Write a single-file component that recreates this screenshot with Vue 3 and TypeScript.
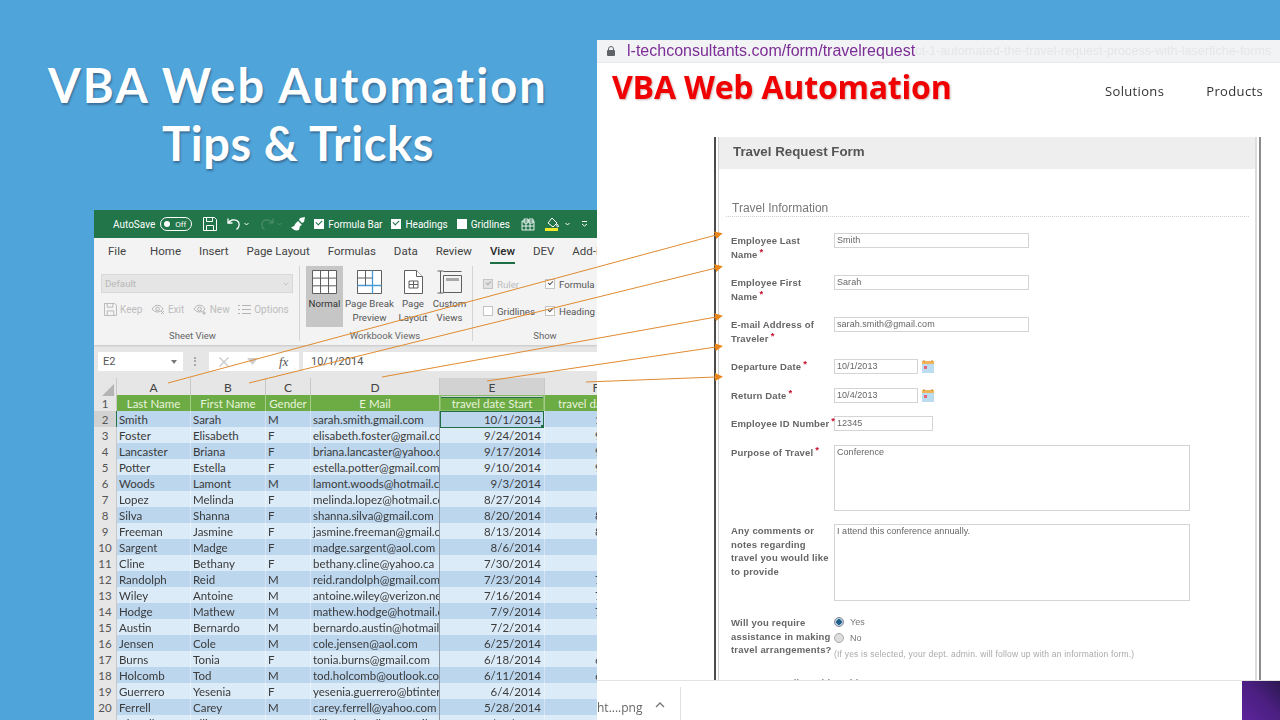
<script setup lang="ts">
interface Person {
  last: string
  first: string
  gender: string
  email: string
  start: string
  end: string
}

const rows: Person[] = [
  { last: 'Smith', first: 'Sarah', gender: 'M', email: 'sarah.smith.gmail.com', start: '10/1/2014', end: '10/4/2014' },
  { last: 'Foster', first: 'Elisabeth', gender: 'F', email: 'elisabeth.foster@gmail.com', start: '9/24/2014', end: '9/27/2014' },
  { last: 'Lancaster', first: 'Briana', gender: 'F', email: 'briana.lancaster@yahoo.com', start: '9/17/2014', end: '9/20/2014' },
  { last: 'Potter', first: 'Estella', gender: 'F', email: 'estella.potter@gmail.com', start: '9/10/2014', end: '9/13/2014' },
  { last: 'Woods', first: 'Lamont', gender: 'M', email: 'lamont.woods@hotmail.com', start: '9/3/2014', end: '9/6/2014' },
  { last: 'Lopez', first: 'Melinda', gender: 'F', email: 'melinda.lopez@hotmail.com', start: '8/27/2014', end: '9/1/2014' },
  { last: 'Silva', first: 'Shanna', gender: 'F', email: 'shanna.silva@gmail.com', start: '8/20/2014', end: '8/23/2014' },
  { last: 'Freeman', first: 'Jasmine', gender: 'F', email: 'jasmine.freeman@gmail.com', start: '8/13/2014', end: '8/16/2014' },
  { last: 'Sargent', first: 'Madge', gender: 'F', email: 'madge.sargent@aol.com', start: '8/6/2014', end: '8/9/2014' },
  { last: 'Cline', first: 'Bethany', gender: 'F', email: 'bethany.cline@yahoo.ca', start: '7/30/2014', end: '8/2/2014' },
  { last: 'Randolph', first: 'Reid', gender: 'M', email: 'reid.randolph@gmail.com', start: '7/23/2014', end: '7/26/2014' },
  { last: 'Wiley', first: 'Antoine', gender: 'M', email: 'antoine.wiley@verizon.net', start: '7/16/2014', end: '7/19/2014' },
  { last: 'Hodge', first: 'Mathew', gender: 'M', email: 'mathew.hodge@hotmail.com', start: '7/9/2014', end: '7/12/2014' },
  { last: 'Austin', first: 'Bernardo', gender: 'M', email: 'bernardo.austin@hotmail.com', start: '7/2/2014', end: '7/5/2014' },
  { last: 'Jensen', first: 'Cole', gender: 'M', email: 'cole.jensen@aol.com', start: '6/25/2014', end: '7/1/2014' },
  { last: 'Burns', first: 'Tonia', gender: 'F', email: 'tonia.burns@gmail.com', start: '6/18/2014', end: '6/21/2014' },
  { last: 'Holcomb', first: 'Tod', gender: 'M', email: 'tod.holcomb@outlook.com', start: '6/11/2014', end: '6/14/2014' },
  { last: 'Guerrero', first: 'Yesenia', gender: 'F', email: 'yesenia.guerrero@btinternet.com', start: '6/4/2014', end: '6/7/2014' },
  { last: 'Ferrell', first: 'Carey', gender: 'M', email: 'carey.ferrell@yahoo.com', start: '5/28/2014', end: '6/1/2014' },
  { last: 'Chandler', first: 'Ellison', gender: 'M', email: 'ellison.chandler@gmail.com', start: '5/21/2014', end: '5/24/2014' }
]

const tabs = ['File', 'Home', 'Insert', 'Page Layout', 'Formulas', 'Data', 'Review', 'View', 'DEV', 'Add-ins']

const columns = ['A', 'B', 'C', 'D', 'E', 'F']

const arrows = [
  'M168 383 L716 235',
  'M249 383 L716 268',
  'M382 377 L716 317',
  'M487 381 L716 347',
  'M586 382 L716 377'
]

interface Field {
  lines: string[]
  value: string
  size: 'wide' | 'date' | 'id'
  cls: string
}

const fields: Field[] = [
  { lines: ['Employee Last', 'Name'], value: 'Smith', size: 'wide', cls: 'row-42' },
  { lines: ['Employee First', 'Name'], value: 'Sarah', size: 'wide', cls: 'row-42' },
  { lines: ['E-mail Address of', 'Traveler'], value: 'sarah.smith@gmail.com', size: 'wide', cls: 'row-42' },
  { lines: ['Departure Date'], value: '10/1/2013', size: 'date', cls: 'row-29' },
  { lines: ['Return Date'], value: '10/4/2013', size: 'date', cls: 'row-28' },
  { lines: ['Employee ID Number'], value: '12345', size: 'id', cls: 'row-29' }
]
</script>

<template>
  <div class="slide">
    <h1 class="headline"><span class="headline-top">VBA Web Automation</span><br />Tips &amp; Tricks</h1>

    <section class="excel">
      <div class="titlebar">
        <span class="autosave">AutoSave</span>
        <span class="toggle"><i></i>Off</span>
        <svg class="qat-save" width="14" height="14" viewBox="0 0 14 14" fill="none" stroke="#fff" stroke-width="1">
          <path d="M.5.5h11l2 2v11H.5z" /><path d="M3.500.5v4h6v-4M3.500 13.500v-5h7v5" />
        </svg>
        <svg class="qat-undo" width="14" height="14" viewBox="0 0 14 14" fill="none" stroke="#fff" stroke-width="1.300">
          <path d="M1 1.500v4.500h4.500M1.300 6C3 2.800 7 2 10 3.600c3 1.800 3 6-.5 9" />
        </svg>
        <svg class="chev" width="5" height="4" viewBox="0 0 5 4" fill="none" stroke="#fff"><path d="M.5 1l2 2 2-2" /></svg>
        <svg class="qat-redo" width="14" height="14" viewBox="0 0 14 14" fill="none" stroke="#4c8f6c" stroke-width="1.200">
          <path d="M13 1.500v4.500H8.500M12.700 6C11 2.800 7 2 4 3.600c-3 1.800-3 6 .5 9" />
        </svg>
        <svg class="chev faint" width="5" height="4" viewBox="0 0 5 4" fill="none" stroke="#4c8f6c"><path d="M.5 1l2 2 2-2" /></svg>
        <svg class="qat-brush" width="15" height="14" viewBox="0 0 15 14">
          <path d="M9 1l5-1-1 5-2 1-3-3z" fill="#fff" /><path d="M7 4l4 4-2 1-1 4c-3 1-6 0-8-3 2 0 4-1 4-3z" fill="#fff" />
        </svg>
        <span class="qat-check qat-check--first"><i class="tick"></i>Formula Bar</span>
        <span class="qat-check"><i class="tick"></i>Headings</span>
        <span class="qat-check"><i></i>Gridlines</span>
        <svg class="qat-sheet" width="14" height="13" viewBox="0 0 14 13" fill="none" stroke="#fff" stroke-width=".9">
          <path d="M1 3h12v9H1zM3 1h4v4H3zM8 1h4v4H8zM1 8h12M5 5v7M9 5v7" />
        </svg>
        <svg class="qat-fill" width="15" height="14" viewBox="0 0 15 14">
          <path d="M7 1l5 5-4 4-5-4zM12 7c1 1 2 2 1 3-1 0-1.500-1-1-3z" fill="none" stroke="#fff" /><rect y="11" width="13" height="3" fill="#f2ea2a" />
        </svg>
        <svg class="chev chev--fill" width="5" height="4" viewBox="0 0 5 4" fill="none" stroke="#fff"><path d="M.5 1l2 2 2-2" /></svg>
        <svg class="qat-more" width="7" height="6" viewBox="0 0 7 6" fill="none" stroke="#fff"><path d="M1 .5h5M1 3l2.500 2L6 3" /></svg>
      </div>

      <nav class="tabs">
        <span v-for="tab in tabs" :key="tab" :class="['tab', { 'tab--active': tab === 'View' }]">{{ tab }}</span>
      </nav>

      <div class="ribbon">
        <div class="group group--sheet">
          <div class="group-body">
            <div class="dropdown">
              <span>Default</span>
              <svg width="6" height="4" viewBox="0 0 6 4" fill="none" stroke="#c6c6c6"><path d="M.5.5L3 3 5.500.5" /></svg>
            </div>
            <div class="sheet-opts">
              <span class="opt">
                <svg width="13" height="13" viewBox="0 0 14 14" fill="none" stroke="#b5b5b5"><path d="M.5.5h11l2 2v11H.5z" /><path d="M3.500.5v4h6v-4M3.500 13.500v-5h7v5" /></svg>
                Keep
              </span>
              <span class="opt">
                <svg width="14" height="11" viewBox="0 0 14 11" fill="none" stroke="#b5b5b5"><path d="M1 5c3-5 8-5 11 0-3 4-8 4-11 0z" /><circle cx="6.500" cy="5" r="1.800" /><path d="M10 7l3 3M13 7l-3 3" /></svg>
                Exit
              </span>
              <span class="opt">
                <svg width="14" height="11" viewBox="0 0 14 11" fill="none" stroke="#b5b5b5"><path d="M1 5c3-5 8-5 11 0-3 4-8 4-11 0z" /><circle cx="6.500" cy="5" r="1.800" /><path d="M11 7v4M9 9h4" /></svg>
                New
              </span>
              <span class="opt">
                <svg width="13" height="11" viewBox="0 0 13 11" fill="none" stroke="#b5b5b5" stroke-width="1.200"><path d="M0 1.500h2M4 1.500h9M0 5.500h2M4 5.500h9M0 9.500h2M4 9.500h9" /></svg>
                Options
              </span>
            </div>
          </div>
          <div class="group-label">Sheet View</div>
        </div>

        <div class="group group--views">
          <div class="views">
            <div class="view view--normal">
              <svg width="25" height="24" viewBox="0 0 25 24" fill="#fff" stroke="#5f5f5f">
                <path d="M.5.5h24v23H.5zM8.500.5v23M16.500.5v23M.5 8.100h24M.5 15.800h24" />
              </svg>
              <span>Normal</span>
            </div>
            <div class="view view--break">
              <svg width="25" height="24" viewBox="0 0 25 24" fill="#fff" stroke="#5f5f5f">
                <path d="M.5.5h24v23H.5z" />
                <path d="M.5 15.500h24M15.500.5v23" stroke="#4a9bd4" stroke-width="1.300" />
                <path d="M8.500.5v15M.5 8h15" />
              </svg>
              <span>Page Break<br />Preview</span>
            </div>
            <div class="view view--layout">
              <svg width="19" height="24" viewBox="0 0 19 24" fill="#fff" stroke="#5f5f5f">
                <path d="M.5.5h12l6 6v17H.5z" /><path d="M12.500.5v6h6" />
                <path d="M5 11h9v7H5zM5 14.500h9M9.500 11v7" />
              </svg>
              <span>Page<br />Layout</span>
            </div>
            <div class="view view--custom">
              <svg width="25" height="24" viewBox="0 0 25 24" fill="none" stroke="#5f5f5f">
                <path d="M.5 1h6M3.500 1v22M.5 23h6M6.500 1.500h18M6.500 5.500h18v17h-18z" />
                <rect x="9" y="8" width="13" height="3" fill="#a8a8a8" stroke="none" />
              </svg>
              <span>Custom<br />Views</span>
            </div>
          </div>
          <div class="group-label">Workbook Views</div>
        </div>

        <div class="group group--show">
          <div class="show-grid">
            <span class="show-item show-item--off"><i class="box box--grey"></i>Ruler</span>
            <span class="show-item"><i class="box box--on"></i>Formula</span>
            <span class="show-item"><i class="box"></i>Gridlines</span>
            <span class="show-item"><i class="box box--on"></i>Heading</span>
          </div>
          <div class="group-label">Show</div>
        </div>
      </div>

      <div class="formula-bar">
        <div class="name-box">E2<svg width="6" height="4" viewBox="0 0 6 4"><path d="M0 0h6L3 4z" fill="#777" /></svg></div>
        <span class="dots"></span>
        <div class="fx-box">
          <svg width="10" height="10" viewBox="0 0 10 10" fill="none" stroke="#c8c8c8" stroke-width="1.300"><path d="M.5.5l9 9M9.500.5l-9 9" /></svg>
          <svg class="fx-ok" width="11" height="7" viewBox="0 0 11 7" fill="#cfcfcf"><path d="M0 0h11L5.500 7z" /></svg>
          <span class="fx">fx</span>
        </div>
        <div class="formula">10/1/2014</div>
      </div>

      <div class="sheet">
        <div class="grid-row grid-row--heads">
          <span class="corner"><i></i></span>
          <span v-for="col in columns" :key="col" :class="['col-head', { 'col-head--sel': col === 'E' }]">{{ col }}</span>
        </div>
        <div class="grid-row grid-row--title">
          <span class="row-num">1</span>
          <span>Last Name</span>
          <span>First Name</span>
          <span>Gender</span>
          <span>E Mail</span>
          <span class="title-e">travel date Start</span>
          <span>travel date End</span>
        </div>
        <div
          v-for="(row, i) in rows"
          :key="row.email"
          :class="['grid-row', 'grid-row--data', i % 2 === 0 ? 'band-dark' : 'band-light']"
        >
          <span :class="['row-num', { 'row-num--sel': i === 0 }]">{{ i + 2 }}</span>
          <span class="cell">{{ row.last }}</span>
          <span class="cell">{{ row.first }}</span>
          <span class="cell">{{ row.gender }}</span>
          <span class="cell cell--mail">{{ row.email }}</span>
          <span :class="['cell', 'cell--date', { 'cell--active': i === 0 }]">{{ row.start }}</span>
          <span class="cell cell--date">{{ row.end }}</span>
        </div>
      </div>
    </section>

    <section class="browser">
      <div class="address">
        <svg class="lock" width="8" height="10" viewBox="0 0 8 10">
          <path d="M1.500 4V3a2.500 2.500 0 015 0v1" fill="none" stroke="#5f6368" /><rect y="4" width="8" height="6" rx="1" fill="#5f6368" />
        </svg>
        <span class="url">l-techconsultants.com/form/travelrequest</span>
        <span class="url-ghost">ct-1-automated-the-travel-request-process-with-laserfiche-forms</span>
      </div>

      <header class="site-head">
        <div class="logo">VBA Web Automation</div>
        <nav class="site-nav">
          <span>Solutions</span>
          <span>Products</span>
        </nav>
      </header>

      <div class="form-panel">
        <div class="form-inner">
          <div class="form-head">Travel Request Form</div>
          <div class="form-section">Travel Information</div>

          <div class="form-body">
            <div v-for="field in fields" :key="field.value" :class="['form-row', field.cls]">
              <div class="label">
                <template v-for="(line, n) in field.lines" :key="line">
                  {{ line }}<b v-if="n === field.lines.length - 1" class="req">*</b><br v-else />
                </template>
              </div>
              <div :class="['input', `input--${field.size}`]">{{ field.value }}</div>
              <svg v-if="field.size === 'date'" class="calendar" width="12" height="13" viewBox="0 0 12 13">
                <rect y="1" width="12" height="12" fill="#bcdcf0" />
                <rect y="1" width="12" height="3" fill="#f0b45a" />
                <path d="M2 0v2M10 0v2" stroke="#c98a30" />
                <rect x="2" y="6" width="3" height="3" fill="#e8667a" />
              </svg>
            </div>

            <div class="form-row row-79">
              <div class="label">Purpose of Travel<b class="req">*</b></div>
              <div class="textarea textarea--purpose">Conference</div>
            </div>

            <div class="form-row row-92">
              <div class="label label--plain">Any comments or<br />notes regarding<br />travel you would like<br />to provide</div>
              <div class="textarea textarea--comments">I attend this conference annually.</div>
            </div>

            <div class="form-row row-60">
              <div class="label label--plain">Will you require<br />assistance in making<br />travel arrangements?</div>
              <div class="choices">
                <div class="choice"><i class="radio radio--on"></i>Yes</div>
                <div class="choice"><i class="radio"></i>No</div>
                <div class="hint">(If yes is selected, your dept. admin. will follow up with an information form.)</div>
              </div>
            </div>

            <div class="form-row">
              <div class="label label--cut">Are you traveling with Guide</div>
            </div>
          </div>
        </div>
      </div>

      <div class="download-bar">
        <span class="file">ht....png</span>
        <svg class="caret" width="10" height="6" viewBox="0 0 10 6" fill="none" stroke="#777" stroke-width="1.300"><path d="M1 5l4-4 4 4" /></svg>
        <span class="sep"></span>
        <span class="corner-logo"></span>
      </div>
    </section>

    <svg class="arrows" width="1280" height="720" viewBox="0 0 1280 720">
      <defs>
        <marker id="head" markerUnits="userSpaceOnUse" markerWidth="9" markerHeight="9" refX="1" refY="4.500" orient="auto">
          <path d="M0 .5L8 4.500 0 8.500z" fill="#e8861a" />
        </marker>
      </defs>
      <path v-for="d in arrows" :key="d" :d="d" stroke="#e08a30" stroke-width="1" fill="none" marker-end="url(#head)" />
    </svg>
  </div>
</template>

<style scoped>
.slide {
  position: relative;
  width: 1280px;
  height: 720px;
  overflow: hidden;
  background: #4fa4da;
}

.headline {
  width: 596px;
  margin: 0;
  padding-top: 56px;
  text-align: center;
  font-family: Lato, "Open Sans", sans-serif;
  font-size: 47px;
  font-weight: 700;
  line-height: 58px;
  letter-spacing: 0.6px;
  color: #fff;
  text-shadow: 1px 2px 2px rgba(40, 70, 100, 0.55);
}

.headline-top { letter-spacing: 2.1px; }

/* excel window */
.excel {
  position: absolute;
  left: 94px;
  top: 210px;
  width: 503px;
  height: 510px;
  overflow: hidden;
  background: #e6e6e6;
  font-family: Roboto, "Open Sans", sans-serif;
  filter: blur(0.3px);
}

.titlebar {
  display: flex;
  align-items: center;
  height: 28px;
  padding-left: 19px;
  background: #227449;
  color: #fff;
  font-size: 10px;
}

.toggle {
  display: flex;
  align-items: center;
  gap: 5px;
  box-sizing: border-box;
  flex: none;
  width: 32px;
  height: 14px;
  margin-left: 5px;
  padding-left: 3px;
  border: 1px solid #fff;
  border-radius: 7px;
  font-size: 8px;
}

.toggle i {
  width: 6px;
  height: 6px;
  border-radius: 50%;
  background: #fff;
}

.titlebar svg { flex: none; }

.qat-save { margin-left: 11px; }
.qat-undo { margin-left: 10px; }
.chev { margin-left: 3px; }
.chev--fill { margin-left: 5px; }
.qat-redo { margin-left: 11px; }
.qat-brush { margin-left: 9px; }
.qat-sheet { margin-left: 11px; }
.qat-fill { margin-left: 10px; }
.qat-more { margin-left: 11px; }

.qat-check {
  display: flex;
  align-items: center;
  gap: 4px;
  margin-left: 9px;
  white-space: nowrap;
}

.qat-check--first { margin-left: 8px; }

.qat-check i {
  position: relative;
  width: 10px;
  height: 10px;
  background: #fff;
}

.tick::after {
  content: "";
  position: absolute;
  left: 2px;
  top: 1px;
  width: 5px;
  height: 3px;
  border-left: 1.500px solid #227449;
  border-bottom: 1.500px solid #227449;
  transform: rotate(-45deg);
}

.tabs {
  display: flex;
  height: 28px;
  padding-left: 14px;
  background: #f3f3f3;
  color: #444;
  font-size: 11.500px;
  line-height: 27px;
  white-space: nowrap;
}

.tab { margin-right: 18px; }
.tab:first-child { margin-right: 24px; }

.tab--active {
  position: relative;
  font-weight: 500;
  color: #2a2a2a;
}

.tab--active::after {
  content: "";
  position: absolute;
  left: 0;
  right: 0;
  bottom: 2px;
  height: 2px;
  background: #1e6f45;
}

.ribbon {
  display: flex;
  height: 79px;
  background: #f3f3f3;
  box-shadow: 0 1px 2px rgba(0, 0, 0, 0.15);
  font-size: 9.700px;
}

.group {
  display: flex;
  flex-direction: column;
  box-sizing: border-box;
  flex: none;
  height: 75px;
}

.group--sheet {
  width: 206px;
  padding: 0 15px 0 7px;
  border-right: 1px solid #d4d4d4;
}

.group--views {
  width: 173px;
  padding: 0 8px 0 6px;
  border-right: 1px solid #d4d4d4;
}

.group--show {
  flex: 1;
  padding-left: 10px;
}

.group-body { flex: 1; }

.group-label {
  height: 14px;
  text-align: center;
  color: #666;
  font-size: 9.500px;
  line-height: 18px;
}

.group--show .group-label { padding-left: 10px; }

.dropdown {
  display: flex;
  align-items: center;
  justify-content: space-between;
  box-sizing: border-box;
  width: 192px;
  height: 19px;
  margin-top: 8px;
  padding: 0 3px;
  background: #e5e5e5;
  border: 1px solid #d8d8d8;
  color: #b8b8b8;
}

.sheet-opts {
  display: flex;
  gap: 8.500px;
  margin-top: 10px;
  padding-left: 3px;
  color: #bdbdbd;
  font-size: 10px;
}

.opt {
  display: flex;
  align-items: center;
  gap: 3px;
}

.views {
  flex: 1;
  display: flex;
  color: #555;
  text-align: center;
  line-height: 13.500px;
}

.view {
  display: flex;
  flex: none;
  flex-direction: column;
  align-items: center;
  padding-top: 4px;
  white-space: nowrap;
}

.view span { margin-top: 3px; }

.view--normal {
  width: 37px;
  height: 61px;
  box-sizing: border-box;
  background: #c6c6c6;
  color: #333;
}

.view--break { width: 53px; }
.view--layout { width: 34px; }
.view--custom { width: 39px; }

.show-grid {
  flex: 1;
  display: grid;
  grid-template-columns: 62px auto;
  align-content: start;
  row-gap: 13px;
  padding-top: 11px;
  color: #555;
  white-space: nowrap;
}

.show-item {
  display: flex;
  align-items: center;
  gap: 4px;
  height: 14px;
}

.show-item--off { color: #bdbdbd; }

.box {
  position: relative;
  box-sizing: border-box;
  width: 10px;
  height: 10px;
  background: #fff;
  border: 1px solid #c4c4c4;
}

.box--grey { background: #e2e2e2; }

.box--on::after,
.box--grey::after {
  content: "";
  position: absolute;
  left: 1.500px;
  top: 1px;
  width: 4px;
  height: 2px;
  border-left: 1px solid #555;
  border-bottom: 1px solid #555;
  transform: rotate(-45deg);
}

.box--grey::after { border-color: #aaa; }

.formula-bar {
  display: flex;
  align-items: center;
  height: 33px;
  padding-left: 4px;
  color: #555;
  font-size: 11px;
}

.name-box {
  display: flex;
  align-items: center;
  justify-content: space-between;
  box-sizing: border-box;
  width: 85px;
  height: 19px;
  padding: 0 6px 0 5px;
  background: #fff;
}

.dots {
  width: 2px;
  height: 9px;
  margin: 0 11px;
  border-left: 2px dotted #aaa;
}

.fx-box {
  display: flex;
  align-items: center;
  box-sizing: border-box;
  width: 90px;
  height: 19px;
  padding-left: 10px;
  background: #fff;
}

.fx-ok { margin-left: 18px; }

.fx {
  margin-left: 21px;
  color: #555;
  font-family: "Liberation Serif", serif;
  font-style: italic;
  font-size: 13px;
}

.formula {
  flex: 1;
  height: 19px;
  margin-left: 4px;
  padding-left: 8px;
  background: #fff;
  line-height: 19px;
}

.sheet {
  font-family: Lato, "Open Sans", sans-serif;
  font-size: 11.500px;
  color: #3a3a3a;
}

.grid-row {
  display: grid;
  grid-template-columns: 23px 74px 75px 45px 129px 105px 103px;
  height: 16px;
  line-height: 17px;
  white-space: nowrap;
}

.grid-row--data {
  grid-template-columns: 23px 74px 75px 45px 129px 105px 111px;
}

.grid-row--heads {
  height: 17px;
  line-height: 19px;
  background: #e6e6e6;
  color: #444;
  text-align: center;
  font-size: 12px;
}

.corner {
  position: relative;
  border-right: 1px solid #c8c8c8;
}

.corner i {
  position: absolute;
  right: 2px;
  bottom: 2px;
  border-left: 12px solid transparent;
  border-bottom: 12px solid #b4b4b4;
}

.col-head { border-right: 1px solid #c8c8c8; }

.col-head--sel {
  background: #d2d2d2;
  border-bottom: 1px solid #227449;
}

.grid-row--title {
  background: #6dab45;
  color: #e8f3dc;
  text-align: center;
}

.grid-row--title > span { border-right: 1px solid #a6cc8c; overflow: hidden; }

.grid-row--title .row-num,
.grid-row--data .row-num {
  background: #e6e6e6;
  color: #555;
  border-right: 1px solid #c8c8c8;
  text-align: center;
}

.grid-row--title .title-e {
  box-shadow: inset 0 0 0 1px #88bb66;
}

.grid-row--data .row-num--sel {
  background: #d2d2d2;
  border-right: 1px solid #227449;
}

.band-dark { background: #bcd6ee; }
.band-light { background: #dcebf8; }

.cell {
  position: relative;
  padding-left: 2px;
  overflow: hidden;
  border-right: 1px solid rgba(255, 255, 255, 0.35);
}

.cell--mail {
  border-right: 1px solid #8b98a3;
}

.cell--date {
  padding-right: 3px;
  text-align: right;
}

.cell--active {
  box-shadow: inset 0 0 0 1px #1f6e45;
}

.cell--active::after {
  content: "";
  position: absolute;
  right: 0;
  bottom: 0;
  width: 3px;
  height: 3px;
  background: #1f6e45;
}

/* browser window */
.browser {
  position: absolute;
  left: 597px;
  top: 40px;
  width: 683px;
  height: 680px;
  overflow: hidden;
  background: #fff;
  filter: blur(0.3px);
}

.address {
  display: flex;
  align-items: center;
  height: 22px;
  margin-bottom: 2px;
  border-bottom: 1px solid #e8e8e8;
  background: #f1f3f4;
  font-family: "Liberation Sans", Arial, sans-serif;
  white-space: nowrap;
}

.lock { margin: 0 0 0 10px; }

.url {
  margin-left: 12px;
  color: #7d2d96;
  font-size: 16px;
}

.url-ghost {
  color: #e4e6e8;
  font-size: 12.600px;
}

.site-head {
  display: flex;
  align-items: center;
  justify-content: space-between;
  box-sizing: border-box;
  height: 72px;
  padding: 0 17px 30px 15px;
}

.logo {
  font-family: "Open Sans", sans-serif;
  font-size: 32px;
  font-weight: 700;
  color: #f00000;
  letter-spacing: -0.2px;
  text-shadow: 1px 1px 2px rgba(90, 0, 0, 0.3);
}

.site-nav {
  display: flex;
  gap: 42px;
  padding-top: 9px;
  font-family: "Open Sans", sans-serif;
  font-size: 13px;
  letter-spacing: 0.35px;
  color: #333;
}

.form-panel {
  box-sizing: border-box;
  width: 547px;
  height: 590px;
  margin-left: 117px;
  border-left: 2px solid #4a4a4a;
  border-right: 2px solid #8a8a8a;
  padding: 0 2px;
  font-family: "Liberation Sans", Arial, sans-serif;
}

.form-inner {
  height: 100%;
  border-left: 1px solid #cfcfcf;
  border-right: 2px solid #dcdcdc;
}

.form-head {
  height: 32px;
  padding-left: 14px;
  background: #eeeeee;
  color: #555;
  font-size: 13.300px;
  font-weight: 700;
  line-height: 30px;
}

.form-section {
  margin: 32px 6px 0 7px;
  height: 15px;
  padding-left: 6px;
  border-bottom: 1px dotted #d0d0d0;
  color: #777;
  font-size: 12px;
  line-height: 14px;
}

.form-body {
  padding: 16px 0 0 12px;
  font-size: 9.500px;
  color: #666;
}

.form-row {
  display: flex;
  align-items: flex-start;
}

.row-42 { height: 42px; }
.row-29 { height: 29px; }
.row-28 { height: 28px; }
.row-79 { height: 79px; }
.row-92 { height: 92px; }
.row-60 { height: 60px; }

.label {
  flex: none;
  width: 103px;
  padding-top: 1px;
  font-weight: 700;
  line-height: 14px;
  letter-spacing: 0.15px;
  white-space: nowrap;
}

.label--plain {
  padding-top: 0;
  line-height: 13.600px;
  letter-spacing: 0.2px;
}

.label--cut { color: #888; padding-top: 0; }

.req {
  position: relative;
  top: -3px;
  margin-left: 2px;
  color: #c8102e;
}

.input,
.textarea {
  box-sizing: border-box;
  flex: none;
  border: 1px solid #d4d4d4;
  background: #fff;
  color: #666;
  font-size: 9px;
  letter-spacing: 0.05px;
  padding-left: 2px;
}

.input {
  height: 15px;
  line-height: 13px;
}

.input--wide { width: 195px; }
.input--date { width: 84px; }
.input--id { width: 99px; }

.calendar { margin: 1px 0 0 4px; }

.textarea { width: 356px; line-height: 13px; }
.textarea--purpose { height: 66px; }
.textarea--comments { height: 77px; }

.choices {
  margin-top: -2px;
  color: #777;
  line-height: 15px;
}

.choice {
  display: flex;
  align-items: center;
  gap: 6px;
  height: 16px;
  font-size: 9px;
}

.radio {
  box-sizing: border-box;
  width: 10px;
  height: 10px;
  border: 1px solid #aaa;
  border-radius: 50%;
  background: #ddd;
}

.radio--on {
  background: radial-gradient(circle, #1f5f8c 0 2.500px, #bcd0dc 3px);
  border-color: #889;
}

.hint {
  margin-top: 1px;
  font-size: 8.500px;
  letter-spacing: 0.2px;
  color: #aaa;
  white-space: nowrap;
}

.download-bar {
  position: absolute;
  left: 0;
  right: 0;
  bottom: 0;
  height: 39px;
  background: #fff;
  border-top: 1px solid #e3e3e3;
  font-family: "Open Sans", sans-serif;
}

.file {
  position: absolute;
  left: 0;
  top: 18px;
  color: #666;
  font-size: 12px;
}

.caret {
  position: absolute;
  left: 58px;
  top: 21px;
}

.sep {
  position: absolute;
  left: 83px;
  top: 6px;
  bottom: 0;
  width: 1px;
  background: #e0e0e0;
}

.corner-logo {
  position: absolute;
  right: 0;
  top: 0;
  bottom: 0;
  width: 38px;
  background: linear-gradient(45deg, #5d259c 0%, #4a1f80 55%, #2c1850 100%);
}

.arrows {
  position: absolute;
  left: 0;
  top: 0;
  pointer-events: none;
}
</style>
